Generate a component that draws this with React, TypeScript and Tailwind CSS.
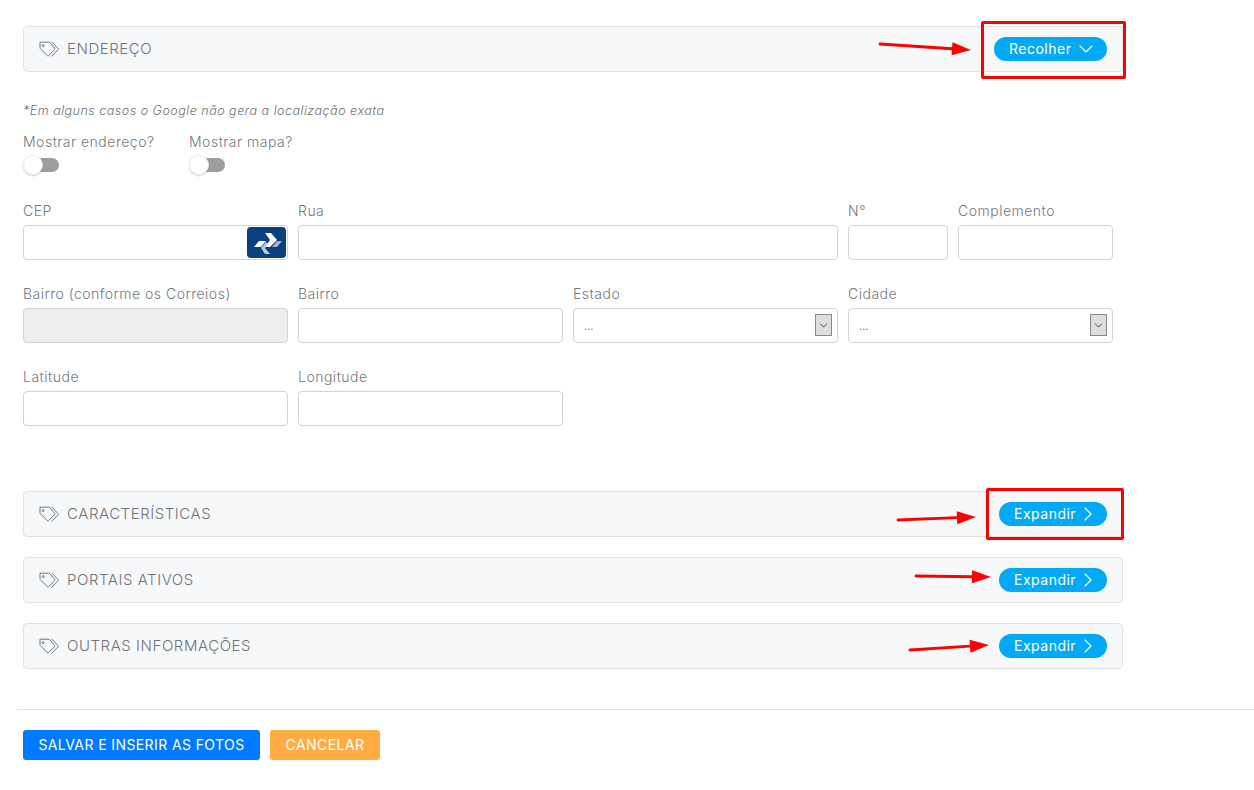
import React from "react";
import { ChevronDown, ChevronRight } from "lucide-react";

const font = { fontFamily: "Inter, 'Open Sans', sans-serif" };

function TagIcon() {
  return (
    <svg width="20" height="16" viewBox="0 0 20 16" fill="none" stroke="#6f777d" strokeWidth="1" className="shrink-0">
      <path d="M1 1.2 H10 a1 1 0 0 1 .7 .3 L15.6 7.3 a1 1 0 0 1 0 1.4 L9.6 14.6 a1 1 0 0 1 -1.4 0 L1.3 7.5 A1 1 0 0 1 1 6.8 Z" strokeLinejoin="round" />
      <circle cx="4.2" cy="4.6" r="1" />
      <path d="M13 1.2 L19 7.6 a1 1 0 0 1 0 1.3 L12.7 15.2" strokeLinecap="round" />
    </svg>
  );
}

function Panel({ title, open, mt }: { title: string; open?: boolean; mt: string }) {
  return (
    <div className={`${mt} flex h-[46px] w-[1100px] items-center justify-between rounded-[4px] border border-[#e0e2e6] bg-[#f7f8fa] pl-[15px] pr-[15px]`}>
      <div className="flex items-center gap-[8px]">
        <TagIcon />
        <span className="text-[15px] font-light tracking-[0.55px] text-[#6f7275]">{title}</span>
      </div>
      {open ? (
        <button className="flex h-[24px] w-[113px] items-center justify-start gap-[3px] rounded-full bg-[#04a9f5] pl-[15px] text-[14px] tracking-[0.5px] text-white">
          <span className="-translate-y-[1px]">Recolher</span> <ChevronDown size={24} strokeWidth={1.1} />
        </button>
      ) : (
        <button className="flex h-[24px] w-[108px] items-center justify-start gap-0 rounded-full bg-[#04a9f5] pl-[15px] text-[14px] tracking-[0.5px] text-white">
          <span className="-translate-y-[1px]">Expandir</span> <ChevronRight size={24} strokeWidth={1.1} />
        </button>
      )}
    </div>
  );
}

function Toggle() {
  return (
    <div className="relative mt-[3px] h-[20px] w-[36px]">
      <div className="absolute left-[8px] top-[3px] h-[14px] w-[28px] rounded-full bg-[#9e9e9e]" />
      <div className="absolute left-0 top-0 h-[20px] w-[20px] rounded-full border border-[#eeeeee] bg-white shadow-[0_1px_2px_rgba(0,0,0,0.2)]" />
    </div>
  );
}

const labelCls = "h-[20px] whitespace-nowrap text-[14px] font-light leading-[20px] tracking-[0.5px] text-[#74787c]";

function Field({ label, w, children, disabled }: { label: string; w: string; children?: React.ReactNode; disabled?: boolean }) {
  return (
    <div className={`${w} shrink-0`}>
      <div className={labelCls}>{label}</div>
      <div className={`relative mt-[4px] h-[35px] rounded-[4px] border border-[#ced4da] ${disabled ? "bg-[#eeeeee]" : "bg-white"}`}>
        {children}
      </div>
    </div>
  );
}

function SelectInner() {
  return (
    <>
      <span className="absolute left-[10px] top-[9px] text-[11px] leading-[16px] text-[#84888c]">...</span>
      <span className="absolute right-[5px] top-[5px] flex h-[22px] w-[17px] items-center justify-center border border-[#8a8a8a] bg-[#dedede]">
        <ChevronDown size={13} strokeWidth={1.6} color="#333" />
      </span>
    </>
  );
}

function CorreiosLogo() {
  return (
    <div className="absolute right-[1px] top-[1px] flex h-[31px] w-[39px] items-center justify-center rounded-[4px] bg-[#0a3f80]">
      <svg width="32" height="24" viewBox="0 0 32 24">
        <polygon points="3,16 8,10 15,10 10,16" fill="#ffffff" />
        <polygon points="14,2 20,2 26,9 19,16 14,16 19,9" fill="#ffffff" />
        <polygon points="10,17 15,11 17,13 14,17 19,23 14,23" fill="#b9cbe0" />
        <polygon points="21,16 26,10 31,10 26,16" fill="#9db6d3" />
      </svg>
    </div>
  );
}

function Arrow({ x1, y1, x2, y2 }: { x1: number; y1: number; x2: number; y2: number }) {
  const a = Math.atan2(y2 - y1, x2 - x1);
  const bx = x2 - Math.cos(a) * 19;
  const by = y2 - Math.sin(a) * 19;
  const px = -Math.sin(a) * 6.5;
  const py = Math.cos(a) * 6.5;
  return (
    <>
      <line x1={x1 + 1} y1={y1} x2={bx} y2={by} stroke="#fe0000" strokeWidth="2.8" strokeLinecap="round" />
      <polygon points={`${x2},${y2} ${bx + px},${by + py} ${bx - px},${by - py}`} fill="#fe0000" />
    </>
  );
}

export default function App() {
  return (
    <div className="relative h-[790px] w-[1254px] overflow-hidden bg-white" style={font}>
      <div className="pl-[23px] pt-[26px]">
        <Panel title="ENDEREÇO" open mt="mt-0" />

        <p className="mt-[29px] h-[20px] text-[12.5px] font-light italic leading-[20px] tracking-[0.5px] text-[#6d7175]">
          *Em alguns casos o Google não gera a localização exata
        </p>

        <div className="mt-[11px] flex gap-[35px]">
          <div className="w-[131px]">
            <div className={labelCls}>Mostrar endereço?</div>
            <Toggle />
          </div>
          <div>
            <div className={labelCls}>Mostrar mapa?</div>
            <Toggle />
          </div>
        </div>

        <div className="mt-[26px] flex gap-[10px]">
          <Field label="CEP" w="w-[265px]"><CorreiosLogo /></Field>
          <Field label="Rua" w="w-[540px]" />
          <Field label="N°" w="w-[100px]" />
          <Field label="Complemento" w="w-[155px]" />
        </div>

        <div className="mt-[24px] flex gap-[10px]">
          <Field label="Bairro (conforme os Correios)" w="w-[265px]" disabled />
          <Field label="Bairro" w="w-[265px]" />
          <Field label="Estado" w="w-[265px]"><SelectInner /></Field>
          <Field label="Cidade" w="w-[265px]"><SelectInner /></Field>
        </div>

        <div className="mt-[24px] flex gap-[10px]">
          <Field label="Latitude" w="w-[265px]" />
          <Field label="Longitude" w="w-[265px]" />
        </div>

        <Panel title="CARACTERÍSTICAS" mt="mt-[65px]" />
        <Panel title="PORTAIS ATIVOS" mt="mt-[20px]" />
        <Panel title="OUTRAS INFORMAÇÕES" mt="mt-[20px]" />
      </div>

      <div className="ml-[17px] mt-[40px] border-t border-[#e2e2e2] pl-[6px] pt-[20px]">
        <div className="flex gap-[10px]">
          <button className="flex h-[30px] w-[237px] items-center justify-center rounded-[3px] bg-[#007bff] pb-[1px] text-[14px] tracking-[0.4px] text-white">
            SALVAR E INSERIR AS FOTOS
          </button>
          <button className="flex h-[30px] w-[110px] items-center justify-center rounded-[3px] bg-[#ffad42] pb-[1px] text-[14px] tracking-[0.45px] text-white">
            CANCELAR
          </button>
        </div>
      </div>

      <div className="absolute left-[981px] top-[21px] h-[58px] w-[145px] rounded-[2px] border-[3px] border-[#fe0000]" />
      <div className="absolute left-[986px] top-[488px] h-[52px] w-[138px] rounded-[2px] border-[3px] border-[#fe0000]" />
      <svg className="absolute left-0 top-0" width="1254" height="790">
        <Arrow x1={879} y1={44} x2={971} y2={50} />
        <Arrow x1={897} y1={520} x2={976} y2={517} />
        <Arrow x1={915} y1={576} x2={991} y2={577} />
        <Arrow x1={909} y1={650} x2={989} y2={645} />
      </svg>
    </div>
  );
}
